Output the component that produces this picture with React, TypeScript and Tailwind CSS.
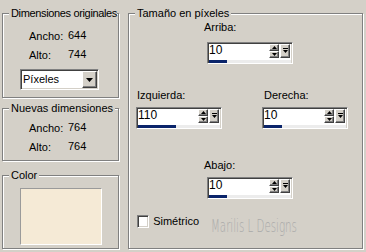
import React from "react";

const sunken =
  "border border-t-[#808080] border-l-[#808080] border-r-white border-b-white shadow-[inset_1px_1px_0_#404040,inset_-1px_-1px_0_#d4d0c8]";
const raised =
  "bg-[#d4d0c8] border border-t-white border-l-white border-r-[#404040] border-b-[#404040] shadow-[inset_-1px_-1px_0_#808080]";

type GroupProps = { title: string; className?: string; legendClass?: string; children?: React.ReactNode };

const Group: React.FC<GroupProps> = ({ title, className, legendClass, children }) => (
  <fieldset
    className={`min-w-0 border border-[#808080] shadow-[inset_1px_1px_0_#fff,1px_1px_0_#fff] ${className ?? ""}`}
  >
    <legend
      className={`ml-[6px] px-[2px] bg-[#d4d0c8] leading-[13px] whitespace-nowrap ${legendClass ?? ""}`}
    >
      {title}
    </legend>
    {children}
  </fieldset>
);

const Row: React.FC<{ label: string; value: string; className?: string }> = ({
  label,
  value,
  className,
}) => (
  <div className={`flex leading-[13px] ${className ?? ""}`}>
    <span className="w-[39px]">{label}</span>
    <span className="-mt-[1px]">{value}</span>
  </div>
);

const Arrow: React.FC<{ up?: boolean; bar?: boolean }> = ({ up, bar }) => (
  <svg width="7" height="6" viewBox="0 0 7 6" className="block">
    {bar && <rect x="1" y="0" width="5" height="1" fill="#000" />}
    {up ? (
      <polygon points="3.5,1 1,4 6,4" fill="#000" />
    ) : (
      <polygon points={bar ? "1,2 6,2 3.5,5" : "1,1 6,1 3.5,4"} fill="#000" />
    )}
  </svg>
);

const SpinField: React.FC<{ value: string; bar: number }> = ({ value, bar }) => (
  <div className={`w-[86px] h-[22px] bg-white flex flex-col ${sunken}`}>
    <div className="flex h-[15px] pl-[1px] pt-[1px] pr-[2px]">
      <span className="flex-1 text-[12px] leading-[12px]">{value}</span>
      <div className="flex flex-col">
        <div className={`w-[10px] h-[7px] flex items-center justify-center ${raised}`}>
          <Arrow up />
        </div>
        <div className={`w-[10px] h-[7px] flex items-center justify-center ${raised}`}>
          <Arrow />
        </div>
      </div>
      <div className={`ml-[1px] w-[10px] h-[14px] flex items-center justify-center ${raised}`}>
        <Arrow bar />
      </div>
    </div>
    <div className="mx-[1px] mt-[2px] h-[3px] bg-[#ececec]">
      <div className="h-full bg-[#0a246a]" style={{ width: bar }} />
    </div>
  </div>
);

export default function App() {
  return (
    <div className="w-[366px] h-[252px] overflow-hidden bg-[#d4d0c8] text-[11px] text-black font-['Liberation_Sans',Arial,sans-serif] flex gap-[9px] pl-[2px] pt-[7px]">
      <div className="flex w-[117px] flex-col">
        <Group
          title="Dimensiones originales"
          className="h-[91px]"
          legendClass="tracking-[-0.35px] pr-0"
        >
          <div className="pt-[10px] pl-[26px]">
            <Row label="Ancho:" value="644" />
            <Row label="Alto:" value="744" className="mt-[6px]" />
          </div>
          <div className={`ml-[17px] mt-[7px] w-[79px] h-[21px] bg-white flex items-center pl-[2px] pr-[1px] ${sunken}`}>
            <span className="flex-1 leading-[13px]">Píxeles</span>
            <div className={`w-[15px] h-[17px] flex items-center justify-center ${raised}`}>
              <svg width="7" height="4" viewBox="0 0 7 4">
                <polygon points="0,0 7,0 3.5,4" fill="#000" />
              </svg>
            </div>
          </div>
        </Group>
        <Group title="Nuevas dimensiones" className="mt-[4px] h-[59px]">
          <div className="pt-[7px] pl-[26px]">
            <Row label="Ancho:" value="764" />
            <Row label="Alto:" value="764" className="mt-[6px]" />
          </div>
        </Group>
        <Group title="Color" className="mt-[8px] h-[80px]">
          <div className="ml-[17px] mt-[6px] w-[82px] h-[57px] bg-[#f5ead6] border border-t-[#9a9a9a] border-l-[#9a9a9a] border-r-white border-b-white" />
        </Group>
      </div>

      <Group title="Tamaño en píxeles" className="w-[235px] h-[242px]">
        <div className="flex flex-col">
          <div className="pl-[75px] mt-[1px] leading-[13px]">Arriba:</div>
          <div className="pl-[78px] mt-[8px]">
            <SpinField value="10" bar={18} />
          </div>
          <div className="flex mt-[25px]">
            <div className="ml-[7px] w-[86px]">
              <div className="pl-[1px] leading-[13px]">Izquierda:</div>
              <div className="mt-[5px]">
                <SpinField value="110" bar={38} />
              </div>
            </div>
            <div className="ml-[40px] w-[86px]">
              <div className="pl-[2px] leading-[13px]">Derecha:</div>
              <div className="mt-[5px]">
                <SpinField value="10" bar={18} />
              </div>
            </div>
          </div>
          <div className="pl-[75px] mt-[30px] leading-[13px]">Abajo:</div>
          <div className="pl-[78px] mt-[5px]">
            <SpinField value="10" bar={18} />
          </div>
          <div className="flex items-start mt-[16px] ml-[8px]">
            <div className="w-[13px] h-[13px] bg-white border border-t-[#808080] border-l-[#808080] border-r-white border-b-white shadow-[inset_1px_1px_0_#404040,inset_-1px_-1px_0_#d4d0c8]" />
            <span className="ml-[4px] w-[63px] leading-[13px]">Simétrico</span>
            <span className="mt-[2px] inline-block origin-left scale-x-[0.57] whitespace-nowrap text-[18px] leading-[18px] text-[#a9a9a9] font-['DejaVu_Sans',sans-serif] font-light">
              Marilis L Designs
            </span>
          </div>
        </div>
      </Group>
    </div>
  );
}
